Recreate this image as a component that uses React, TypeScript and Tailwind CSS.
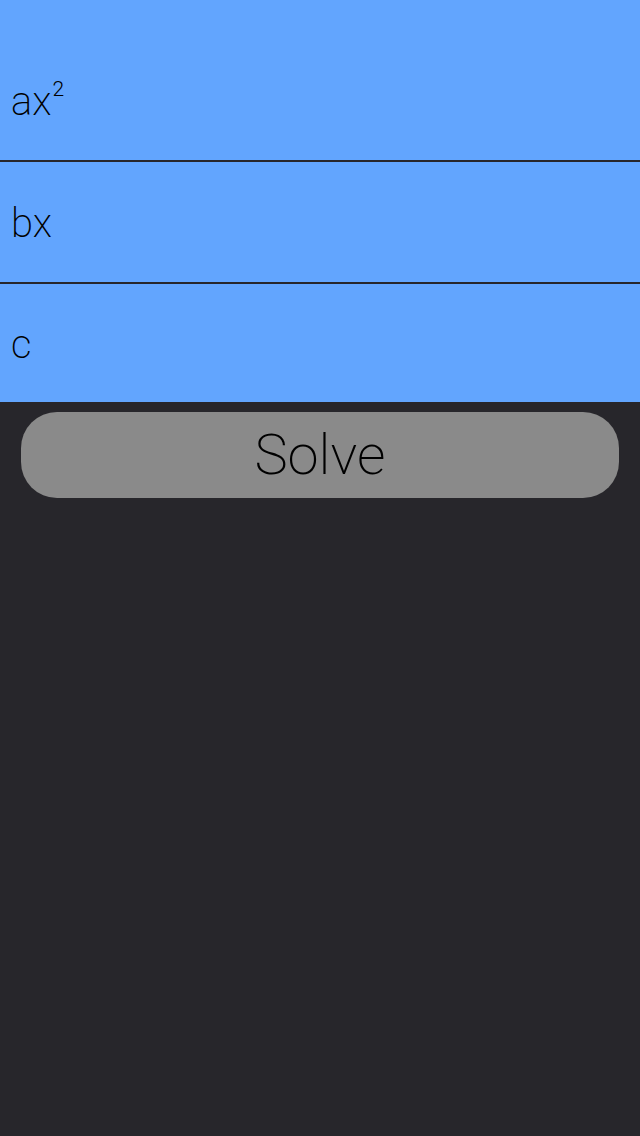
export default function App() {
  return (
    <div className="flex flex-col w-[640px] h-[1136px] bg-[#27262b] font-['Roboto','Liberation_Sans',sans-serif] font-extralight text-black">
      <div className="flex flex-col bg-[#62a5fe] pt-10">
        <div className="flex items-center h-[120px] px-[11px] text-[40px] leading-none">
          <span className="pt-1">
            ax<sup className="text-[21px] font-light relative -top-[19px] ml-[1px]">2</sup>
          </span>
        </div>
        <div className="h-[2px] bg-[#27262b]" />
        <div className="flex items-center h-[120px] px-[11px] text-[40px] leading-none">
          <span className="pt-1">bx</span>
        </div>
        <div className="h-[2px] bg-[#27262b]" />
        <div className="flex items-center h-[118px] px-[11px] text-[40px] leading-none">
          <span className="pt-1">c</span>
        </div>
      </div>
      <div className="px-[21px] pt-[10px]">
        <button className="flex items-center justify-center w-full h-[86px] rounded-[36px] bg-[#8a8a8a] text-[56px]">
          Solve
        </button>
      </div>
    </div>
  );
}
